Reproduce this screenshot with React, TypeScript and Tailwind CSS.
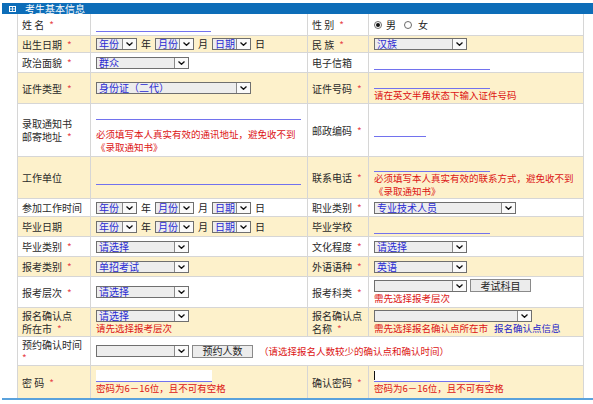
function Chevron() {
  return (
    <svg width="7" height="4" viewBox="0 0 7 4" className="block">
      <path d="M0.5 0.5 L3.5 3.3 L6.5 0.5" fill="none" stroke="#111" strokeWidth="1.3" />
    </svg>
  );
}

function Select({ w, text = "" }: { w: string; text?: string }) {
  return (
    <div className={`flex h-[12px] shrink-0 items-stretch border border-[#6f6f6f] bg-[#ededed] ${w}`}>
      <span className="flex flex-1 items-center whitespace-nowrap pl-[2px] text-[10px] leading-[10px] text-[#2a2ad2]">
        {text}
      </span>
      <span className="flex w-[14px] items-center justify-center border-l border-[#8a8a8a] bg-[#fafafa]">
        <Chevron />
      </span>
    </div>
  );
}

function Btn({ text }: { text: string }) {
  return (
    <div className="ml-[3px] flex h-[13px] w-[61px] shrink-0 items-center justify-center border border-[#8a8a8a] bg-[#ececec] text-[10px] leading-none text-[#222]">
      {text}
    </div>
  );
}

function Line({ w }: { w: string }) {
  return <div className={`h-[14px] shrink-0 border-b border-[#7272ee] ${w}`} />;
}

function Hint({ children }: { children: React.ReactNode }) {
  return <div className="whitespace-nowrap text-[9.5px] leading-[13px] text-[#dc1414]">{children}</div>;
}

function Star() {
  return <span className="ml-[5px] text-[#e8474c]">*</span>;
}

function Cell({
  y,
  children,
  className = "",
}: {
  y?: boolean;
  children?: React.ReactNode;
  className?: string;
}) {
  return (
    <div className={`flex items-center ${y ? "bg-[#fdf1cb]" : "bg-white"} ${className}`}>
      {children}
    </div>
  );
}

function Label({ y, children }: { y?: boolean; children: React.ReactNode }) {
  return (
    <Cell y={y} className="px-[4px] text-[10px] leading-[13px] text-[#2a2a2a]">
      <div>{children}</div>
    </Cell>
  );
}

function Val({ y, children, className = "" }: { y?: boolean; children?: React.ReactNode; className?: string }) {
  return (
    <Cell y={y} className={`pl-[5px] text-[10px] text-[#222] ${className}`}>
      {children}
    </Cell>
  );
}

function DateSel() {
  return (
    <div className="flex items-center text-[10px] leading-none text-[#222]">
      <Select w="w-[41px]" text="年份" />
      <span className="ml-[4px] mr-[4px]">年</span>
      <Select w="w-[39px]" text="月份" />
      <span className="ml-[4px] mr-[4px]">月</span>
      <Select w="w-[39px]" text="日期" />
      <span className="ml-[4px]">日</span>
    </div>
  );
}

function Radio({ on }: { on?: boolean }) {
  return (
    <span className="flex h-[8px] w-[8px] items-center justify-center rounded-full border border-[#6a6a6a] bg-white">
      {on && <span className="h-[4px] w-[4px] rounded-full bg-[#111]" />}
    </span>
  );
}

function Pwd({ w, caret }: { w: string; caret?: boolean }) {
  return (
    <div className={`flex h-[12px] items-stretch border-b border-[#7272ee] bg-white ${w}`}>
      {caret && <span className="my-[1px] w-px bg-[#111]" />}
    </div>
  );
}

export default function App() {
  return (
    <div className="h-[404px] w-[593px] overflow-hidden bg-white pl-[2px] pt-[3px] font-['Noto_Sans_CJK_SC',sans-serif]">
      <div className="flex h-[11px] items-center bg-[#0d6db8] text-[10px] leading-none text-white">
        <svg width="7" height="6" viewBox="0 0 7 6" className="ml-[7px]">
          <rect x="0.5" y="0.5" width="6" height="5" fill="none" stroke="#fff" strokeWidth="1" />
          <path d="M3.5 1 V5 M1 3 H6" stroke="#fff" strokeWidth="0.8" />
        </svg>
        <span className="ml-[9px]">考生基本信息</span>
      </div>

      <div className="ml-[15px] grid w-[567px] grid-cols-[72px_216px_60px_214px] grid-rows-[21px_16px_19px_30px_52px_41px_17px_19px_19px_19px_30px_28px_28px_32px] gap-px border-x border-[#d6d6d6] bg-[#d6d6d6]">
        {/* 姓名 */}
        <Label>姓 名<Star /></Label>
        <Val><Line w="w-[115px]" /></Val>
        <Label>性 别<Star /></Label>
        <Val className="leading-none">
          <Radio on />
          <span className="ml-[4px]">男</span>
          <span className="ml-[8px]"><Radio /></span>
          <span className="ml-[6px]">女</span>
        </Val>

        {/* 出生日期 */}
        <Label y>出生日期<Star /></Label>
        <Val y><DateSel /></Val>
        <Label y>民 族<Star /></Label>
        <Val y><Select w="w-[93px]" text="汉族" /></Val>

        {/* 政治面貌 */}
        <Label>政治面貌<Star /></Label>
        <Val><Select w="w-[93px]" text="群众" /></Val>
        <Label>电子信箱</Label>
        <Val><Line w="w-[116px]" /></Val>

        {/* 证件类型 */}
        <Label y>证件类型<Star /></Label>
        <Val y><Select w="w-[155px]" text="身份证（二代）" /></Val>
        <Label y>证件号码<Star /></Label>
        <Val y>
          <div>
            <Line w="w-[116px]" />
            <Hint>请在英文半角状态下输入证件号码</Hint>
          </div>
        </Val>

        {/* 录取通知书 */}
        <Label>
          录取通知书
          <br />
          邮寄地址<Star />
        </Label>
        <Val>
          <div>
            <Line w="w-[205px]" />
            <div className="mt-[8px]">
              <Hint>
                必须填写本人真实有效的通讯地址，避免收不到
                <br />
                《录取通知书》
              </Hint>
            </div>
          </div>
        </Val>
        <Label>邮政编码<Star /></Label>
        <Val><Line w="w-[52px]" /></Val>

        {/* 工作单位 */}
        <Label y>工作单位</Label>
        <Val y><Line w="w-[205px]" /></Val>
        <Label y>联系电话<Star /></Label>
        <Val y>
          <div>
            <Line w="w-[116px]" />
            <Hint>
              必须填写本人真实有效的联系方式，避免收不到
              <br />
              《录取通知书》
            </Hint>
          </div>
        </Val>

        {/* 参加工作时间 */}
        <Label>参加工作时间</Label>
        <Val><DateSel /></Val>
        <Label>职业类别<Star /></Label>
        <Val><Select w="w-[142px]" text="专业技术人员" /></Val>

        {/* 毕业日期 */}
        <Label y>毕业日期</Label>
        <Val y><DateSel /></Val>
        <Label y>毕业学校</Label>
        <Val y><Line w="w-[116px]" /></Val>

        {/* 毕业类别 */}
        <Label>毕业类别<Star /></Label>
        <Val><Select w="w-[93px]" text="请选择" /></Val>
        <Label>文化程度<Star /></Label>
        <Val><Select w="w-[93px]" text="请选择" /></Val>

        {/* 报考类别 */}
        <Label y>报考类别<Star /></Label>
        <Val y><Select w="w-[93px]" text="单招考试" /></Val>
        <Label y>外语语种<Star /></Label>
        <Val y><Select w="w-[93px]" text="英语" /></Val>

        {/* 报考层次 */}
        <Label>报考层次<Star /></Label>
        <Val><Select w="w-[93px]" text="请选择" /></Val>
        <Label>报考科类<Star /></Label>
        <Val>
          <div>
            <div className="flex items-center">
              <Select w="w-[93px]" />
              <Btn text="考试科目" />
            </div>
            <Hint>需先选择报考层次</Hint>
          </div>
        </Val>

        {/* 报名确认点 */}
        <Label y>
          报名确认点
          <br />
          所在市<Star />
        </Label>
        <Val y>
          <div>
            <Select w="w-[93px]" text="请选择" />
            <Hint>请先选择报考层次</Hint>
          </div>
        </Val>
        <Label y>
          报名确认点
          <br />
          名称<Star />
        </Label>
        <Val y>
          <div>
            <Select w="w-[158px]" />
            <div className="flex">
              <Hint>需先选择报名确认点所在市</Hint>
              <span className="ml-[6px] text-[9.5px] leading-[13px] text-[#2323c8]">报名确认点信息</span>
            </div>
          </div>
        </Val>

        {/* 预约确认时间 */}
        <Label>
          预约确认时间
          <br />
          <span className="text-[#e8474c]">*</span>
        </Label>
        <Val className="col-span-3">
          <Select w="w-[93px]" />
          <Btn text="预约人数" />
          <div className="ml-[6px]">
            <Hint>（请选择报名人数较少的确认点和确认时间）</Hint>
          </div>
        </Val>

        {/* 密码 */}
        <Label y>密 码<Star /></Label>
        <Val y>
          <div>
            <Pwd w="w-[116px]" />
            <Hint>密码为6－16位，且不可有空格</Hint>
          </div>
        </Val>
        <Label y>确认密码<Star /></Label>
        <Val y>
          <div>
            <Pwd w="w-[116px]" caret />
            <Hint>密码为6－16位，且不可有空格</Hint>
          </div>
        </Val>
      </div>
      <div className="h-[2px] bg-[#5aa2dc]" />
    </div>
  );
}
